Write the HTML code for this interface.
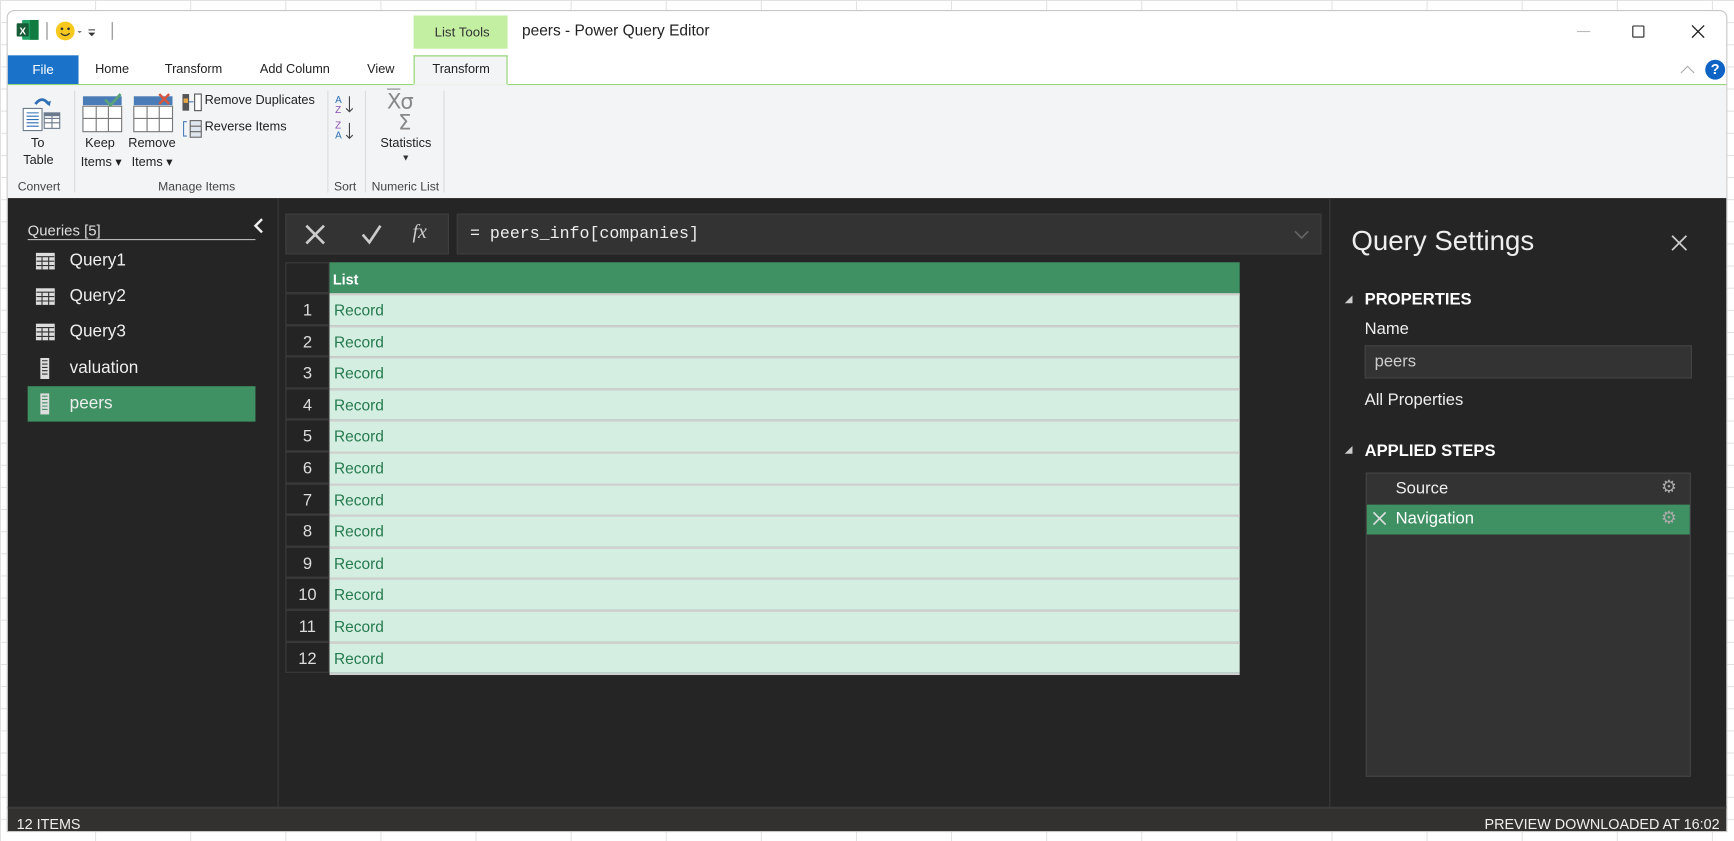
<!DOCTYPE html>
<html><head><meta charset="utf-8">
<style>
*{box-sizing:border-box;margin:0;padding:0}
html,body{width:1734px;height:841px;overflow:hidden;background:#fff;font-family:"Liberation Sans",sans-serif}
#w{position:absolute;left:0;top:0;width:1568px;height:760px;transform:scale(1.10587,1.1066);transform-origin:0 0;
background-color:#fff;background-image:linear-gradient(#e1e1e1 1px,transparent 1px),linear-gradient(90deg,#e1e1e1 1px,transparent 1px);background-size:86px 20px;}
.a{position:absolute}
.win{left:6px;top:9px;width:1556px;height:743px;background:#fff;border:1px solid #c8c8c8;border-radius:7px 7px 0 0;overflow:hidden}
.t{position:absolute;white-space:nowrap}
.rb{font-size:11.5px;color:#222}
.gl{font-size:11px;color:#444;top:153px}
.sep{position:absolute;top:72px;width:1px;height:92px;background:#dcdcdc}
.q{position:absolute;left:18px;width:206px;height:32px;color:#eee;font-size:15.5px}
.q span{position:absolute;left:38px;top:7px}
.row{position:absolute;left:0;width:863px;height:28.6px}
.num{position:absolute;left:0;width:40px;height:100%;border:1px solid #3c3c3c;color:#ddd;font-size:15px;text-align:center;padding-top:6px;background:#242424}
.cell{position:absolute;left:40px;right:0;top:0;height:100%;background:#d4efe1;border-top:2px solid #cfcfcf;color:#257a4e;font-size:14px;padding:5px 0 0 4px}
</style></head><body>
<div id="w">
<div class="a win">
 <svg class="a" style="left:8px;top:8px" width="20" height="18"><rect x="5" y="0" width="15" height="18" rx="1" fill="#21a366"/><rect x="12" y="0" width="8" height="18" fill="#107c41"/><rect x="0" y="3" width="11" height="12" rx="1" fill="#185c37"/><text x="2.5" y="13" font-size="9" font-weight="bold" fill="#fff" font-family="Liberation Sans">X</text></svg>
 <div class="a" style="left:35px;top:10px;width:1px;height:16px;background:#888"></div>
 <svg class="a" style="left:43px;top:8px" width="36" height="20"><circle cx="9" cy="10" r="8.5" fill="#f7c81d"/><circle cx="6" cy="8" r="1.2" fill="#333"/><circle cx="12" cy="8" r="1.2" fill="#333"/><path d="M5 12 Q9 16 13 12" stroke="#333" stroke-width="1.2" fill="none"/><path d="M20 10 l2 2 2-2z" fill="#777"/><path d="M30 9h6M31 12 l2 2 2-2z" stroke="#333" fill="#333"/></svg>
 <div class="a" style="left:94px;top:10px;width:1px;height:16px;background:#888"></div>
 <div class="a" style="left:367px;top:4px;width:85px;height:30px;background:#c3efa2"></div>
 <div class="t" style="left:386px;top:12px;font-size:12px;color:#333">List Tools</div>
 <div class="t" style="left:465px;top:9px;font-size:14px;color:#222">peers - Power Query Editor</div>
 <div class="a" style="left:1419px;top:18px;width:12px;height:1px;background:#bbb"></div>
 <div class="a" style="left:1469px;top:13px;width:11px;height:11px;border:1.3px solid #222;border-radius:1px"></div>
 <svg class="a" style="left:1522px;top:12px" width="13" height="13"><path d="M1 1L12 12M12 1L1 12" stroke="#222" stroke-width="1.2"/></svg>
 <div class="a" style="left:0;top:40px;width:64px;height:26px;background:#1b73c9;color:#fff;font-size:12px;text-align:center;padding-top:6px">File</div>
 <div class="t rb" style="left:79px;top:47px">Home</div>
 <div class="t rb" style="left:142px;top:47px">Transform</div>
 <div class="t rb" style="left:228px;top:47px">Add Column</div>
 <div class="t rb" style="left:325px;top:47px">View</div>
 <div class="a" style="left:367px;top:40px;width:85px;height:27px;background:#f3f4f6;border:1px solid #8ed46c;border-bottom:none"></div>
 <div class="t rb" style="left:384px;top:47px">Transform</div>
 <div class="a" style="left:0;top:66px;width:1556px;height:1px;background:#8ed46c"></div>
 <div class="a" style="left:367px;top:66px;width:85px;height:1px;background:#f3f4f6"></div>
 <svg class="a" style="left:1512px;top:48px" width="14" height="9"><path d="M1 8L7 2L13 8" stroke="#aaa" fill="none"/></svg>
 <div class="a" style="left:1535px;top:44px;width:18px;height:18px;border-radius:50%;background:#0e63c4;color:#fff;font-size:13px;font-weight:bold;text-align:center;line-height:18px">?</div>
 <div class="a" style="left:0;top:67px;width:1556px;height:102px;background:#f3f4f6"></div>
 <svg class="a" style="left:13px;top:76px" width="36" height="36"><path d="M12 8 Q18 0 24 8" stroke="#2f6fb5" stroke-width="2.5" fill="none"/><path d="M21 7l4 3 1-5z" fill="#2f6fb5"/><rect x="1" y="12" width="17" height="20" fill="#fff" stroke="#6b7a8c"/><path d="M4 16h11M4 19h11M4 22h11M4 25h11M4 28h11" stroke="#2f6fb5"/><rect x="20" y="16" width="14" height="14" fill="#fff" stroke="#6b7a8c"/><path d="M20 21h14M20 25h14M27 16v14" stroke="#6b7a8c"/><rect x="20" y="16" width="14" height="3" fill="#6b7a8c"/></svg>
 <div class="t rb" style="left:21px;top:114px">To</div>
 <div class="t rb" style="left:14px;top:129px">Table</div>
 <svg class="a" style="left:67px;top:74px" width="40" height="38"><rect x="1" y="3" width="35" height="8" fill="#4a7db8"/><rect x="1" y="12" width="35" height="23" fill="#fff" stroke="#777"/><path d="M1 23h35M13 12v23M24 12v23" stroke="#777"/><path d="M21 6l5 5 9-10" stroke="#5aa27a" stroke-width="2.5" fill="none"/></svg>
 <div class="t rb" style="left:70px;top:114px">Keep</div>
 <div class="t rb" style="left:66px;top:129px">Items ▾</div>
 <svg class="a" style="left:113px;top:74px" width="40" height="38"><rect x="1" y="3" width="35" height="8" fill="#4a7db8"/><rect x="1" y="12" width="35" height="23" fill="#fff" stroke="#777"/><path d="M1 23h35M13 12v23M24 12v23" stroke="#777"/><path d="M24 1l9 9M33 1l-9 9" stroke="#d9543a" stroke-width="2.2"/></svg>
 <div class="t rb" style="left:109px;top:114px">Remove</div>
 <div class="t rb" style="left:112px;top:129px">Items ▾</div>
 <svg class="a" style="left:157px;top:74px" width="20" height="18"><rect x="1" y="1" width="6" height="15" fill="#555"/><rect x="2" y="5" width="4" height="4" fill="#e8a84a"/><rect x="12" y="1" width="6" height="15" fill="#fff" stroke="#555"/><path d="M7 8h4" stroke="#4a7db8"/></svg>
 <div class="t rb" style="left:178px;top:75px">Remove Duplicates</div>
 <svg class="a" style="left:157px;top:98px" width="20" height="18"><path d="M5 2H2v13h3" stroke="#4a7db8" fill="none"/><rect x="8" y="1" width="10" height="15" fill="#dfe5ee" stroke="#666"/><path d="M8 6h10M8 11h10" stroke="#666"/></svg>
 <div class="t rb" style="left:178px;top:99px">Reverse Items</div>
 <div class="sep" style="left:60px"></div>
 <div class="sep" style="left:289px"></div>
 <div class="sep" style="left:323px"></div>
 <div class="sep" style="left:394px"></div>
 <svg class="a" style="left:296px;top:74px" width="20" height="45"><text x="0" y="9" font-size="9" fill="#2f6fb5" font-family="Liberation Sans">A</text><text x="0" y="18" font-size="9" fill="#8a4fb0" font-family="Liberation Sans">Z</text><path d="M13 3v14M10 14l3 3 3-3" stroke="#444" fill="none"/><text x="0" y="32" font-size="9" fill="#8a4fb0" font-family="Liberation Sans">Z</text><text x="0" y="41" font-size="9" fill="#2f6fb5" font-family="Liberation Sans">A</text><path d="M13 27v14M10 38l3 3 3-3" stroke="#444" fill="none"/></svg>
 <div class="t" style="left:343px;top:71px;font-size:19px;color:#888;font-family:'DejaVu Sans',sans-serif;letter-spacing:-1px"><span style="text-decoration:overline">X</span>σ</div>
 <div class="t" style="left:353px;top:90px;font-size:19px;color:#888;font-family:'DejaVu Sans',sans-serif">Σ</div>
 <div class="t rb" style="left:337px;top:114px">Statistics</div>
 <div class="t" style="left:356px;top:128px;font-size:8px;color:#333">▼</div>
 <div class="t gl" style="left:9px">Convert</div>
 <div class="t gl" style="left:136px">Manage Items</div>
 <div class="t gl" style="left:295px">Sort</div>
 <div class="t gl" style="left:329px">Numeric List</div>
 <div class="a" style="left:0;top:169px;width:1556px;height:551px;background:#252525"></div>
 <div class="a" style="left:244px;top:169px;width:1px;height:551px;background:#3a3a3a"></div>
 <div class="a" style="left:1195px;top:169px;width:1px;height:551px;background:#3a3a3a"></div>
 <div class="t" style="left:18px;top:191px;font-size:13.5px;color:#ddd">Queries [5]</div>
 <div class="a" style="left:18px;top:206px;width:206px;height:1px;background:#bbb"></div>
 <svg class="a" style="left:222px;top:187px" width="10" height="14"><path d="M8 1L2 7l6 6" stroke="#eee" stroke-width="2.2" fill="none"/></svg>
 <div class="q" style="top:210px"><svg class="a" style="left:7px;top:8px" width="18" height="16"><rect x=".5" y=".5" width="17" height="15" fill="#ddd"/><path d="M1 4h16M1 8h16M1 12h16M6 4v12M12 4v12" stroke="#333"/></svg><span>Query1</span></div>
 <div class="q" style="top:242px"><svg class="a" style="left:7px;top:8px" width="18" height="16"><rect x=".5" y=".5" width="17" height="15" fill="#ddd"/><path d="M1 4h16M1 8h16M1 12h16M6 4v12M12 4v12" stroke="#333"/></svg><span>Query2</span></div>
 <div class="q" style="top:274px"><svg class="a" style="left:7px;top:8px" width="18" height="16"><rect x=".5" y=".5" width="17" height="15" fill="#ddd"/><path d="M1 4h16M1 8h16M1 12h16M6 4v12M12 4v12" stroke="#333"/></svg><span>Query3</span></div>
 <div class="q" style="top:307px"><svg class="a" style="left:11px;top:6px" width="9" height="20"><rect x=".5" y=".5" width="8" height="19" fill="#ddd"/><path d="M2 3h5M2 6h5M2 9h5M2 12h5M2 15h5" stroke="#333"/></svg><span>valuation</span></div>
 <div class="q" style="top:339px;background:#3f9163"><svg class="a" style="left:11px;top:6px" width="9" height="20"><rect x=".5" y=".5" width="8" height="19" fill="#ddd"/><path d="M2 3h5M2 6h5M2 9h5M2 12h5M2 15h5" stroke="#3f9163"/></svg><span>peers</span></div>
 <div class="a" style="left:251px;top:183px;width:148px;height:37px;background:#333;border:1px solid #3e3e3e"></div>
 <svg class="a" style="left:268px;top:192px" width="20" height="20"><path d="M2 2L18 18M18 2L2 18" stroke="#ccc" stroke-width="2.4"/></svg>
 <svg class="a" style="left:319px;top:192px" width="20" height="20"><path d="M2 10l6 7L18 2" stroke="#ccc" stroke-width="2.4" fill="none"/></svg>
 <div class="t" style="left:366px;top:189px;font-size:18px;color:#ccc;font-family:'Liberation Serif',serif;font-style:italic">fx</div>
 <div class="a" style="left:406px;top:183px;width:782px;height:37px;background:#333;border:1px solid #3e3e3e"></div>
 <div class="t" style="left:418px;top:193px;font-size:15px;color:#eee;font-family:'Liberation Mono',monospace">= peers_info[companies]</div>
 <svg class="a" style="left:1163px;top:197px" width="14" height="10"><path d="M1 2l6 6 6-6" stroke="#666" stroke-width="1.5" fill="none"/></svg>
 <div class="a" style="left:251px;top:227px;width:863px;height:373px">
  <div class="a" style="left:0;top:0;width:40px;height:28px;border:1px solid #3c3c3c"></div>
  <div class="a" style="left:40px;top:0;width:823px;height:28px;background:#3f9163;color:#fff;font-weight:bold;font-size:13px;padding:8px 0 0 3px">List</div>
  <div class="row" style="top:28px"><div class="num">1</div><div class="cell">Record</div></div>
  <div class="row" style="top:56.6px"><div class="num">2</div><div class="cell">Record</div></div>
  <div class="row" style="top:85.2px"><div class="num">3</div><div class="cell">Record</div></div>
  <div class="row" style="top:113.8px"><div class="num">4</div><div class="cell">Record</div></div>
  <div class="row" style="top:142.4px"><div class="num">5</div><div class="cell">Record</div></div>
  <div class="row" style="top:171px"><div class="num">6</div><div class="cell">Record</div></div>
  <div class="row" style="top:199.6px"><div class="num">7</div><div class="cell">Record</div></div>
  <div class="row" style="top:228.2px"><div class="num">8</div><div class="cell">Record</div></div>
  <div class="row" style="top:256.8px"><div class="num">9</div><div class="cell">Record</div></div>
  <div class="row" style="top:285.4px"><div class="num">10</div><div class="cell">Record</div></div>
  <div class="row" style="top:314px"><div class="num">11</div><div class="cell">Record</div></div>
  <div class="row" style="top:342.6px"><div class="num">12</div><div class="cell">Record</div></div>
  <div class="a" style="left:40px;top:371px;width:823px;height:2px;background:#cfcfcf"></div>
 </div>
 <div class="t" style="left:1215px;top:194px;font-size:25px;color:#eee">Query Settings</div>
 <svg class="a" style="left:1504px;top:202px" width="15" height="15"><path d="M1 1l13 13M14 1L1 14" stroke="#ccc" stroke-width="1.6"/></svg>
 <svg class="a" style="left:1208px;top:256px" width="9" height="9"><path d="M8 1v7H1z" fill="#ccc"/></svg>
 <div class="t" style="left:1227px;top:252px;font-size:15px;font-weight:bold;color:#fff">PROPERTIES</div>
 <div class="t" style="left:1227px;top:279px;font-size:15px;color:#eee">Name</div>
 <div class="a" style="left:1227px;top:302px;width:296px;height:30px;background:#333;border:1px solid #444"></div>
 <div class="t" style="left:1236px;top:308px;font-size:15px;color:#ccc">peers</div>
 <div class="t" style="left:1227px;top:343px;font-size:15px;color:#eee">All Properties</div>
 <svg class="a" style="left:1208px;top:392px" width="9" height="9"><path d="M8 1v7H1z" fill="#ccc"/></svg>
 <div class="t" style="left:1227px;top:389px;font-size:15px;font-weight:bold;color:#fff">APPLIED STEPS</div>
 <div class="a" style="left:1228px;top:417px;width:294px;height:275px;background:#333;border:1px solid #444"></div>
 <div class="t" style="left:1255px;top:423px;font-size:15px;color:#eee">Source</div>
 <div class="a" style="left:1229px;top:446px;width:292px;height:27px;background:#3f9163"></div>
 <svg class="a" style="left:1234px;top:452px" width="13" height="13"><path d="M1 1l11 11M12 1L1 12" stroke="#ddd" stroke-width="1.5"/></svg>
 <div class="t" style="left:1255px;top:450px;font-size:15px;color:#fff">Navigation</div>
 <div class="t" style="left:1495px;top:420px;font-size:16px;color:#aaa;font-family:'DejaVu Sans',sans-serif">⚙</div>
 <div class="t" style="left:1495px;top:448px;font-size:16px;color:#aaa;font-family:'DejaVu Sans',sans-serif">⚙</div>
 <div class="a" style="left:0;top:719px;width:1556px;height:24px;background:#323130;border-top:2px solid #3a3a3a"></div>
 <div class="t" style="left:8px;top:727px;font-size:13px;color:#eee">12 ITEMS</div>
 <div class="t" style="right:6px;top:727px;font-size:13px;color:#eee">PREVIEW DOWNLOADED AT 16:02</div>
</div>
</div>
</body></html>
